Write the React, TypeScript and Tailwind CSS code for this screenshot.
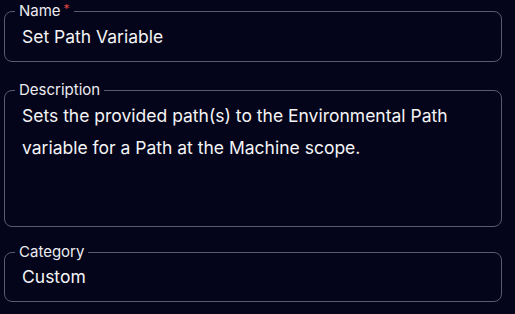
import React from 'react';

const Field = ({ label, required, children, className = '' }: { label: string; required?: boolean; children: React.ReactNode; className?: string }) => (
    <fieldset className={`rounded-lg border border-[#5a5a6e] px-[10px] ${className}`}>
        <legend className="px-1 text-[15px] leading-5 text-[#ececf0]">
            {label}
            {required && <span className="ml-[3px] align-top text-[12px] leading-4 text-[#e0453f]">*</span>}
        </legend>
        {children}
    </fieldset>
);

export default function App() {
    return (
        <div className="min-h-screen bg-[#04041a] px-[4px] pt-px pr-[13px] font-['Inter','Noto_Sans',sans-serif] text-white">
            <Field label="Name" required>
                <div className="pl-[7px] pt-[4px] pb-[12px] text-[17.5px] leading-6 text-[#f4f4f6]">Set Path Variable</div>
            </Field>
            <Field label="Description" className="mt-[18px]">
                <div className="h-[126px] pl-[7px] pr-4 text-[17.5px] leading-8 text-[#f4f4f6]">
                    Sets the provided path(s) to the Environmental Path variable for a Path at the Machine scope.
                </div>
            </Field>
            <Field label="Category" className="mt-[15px]">
                <div className="pl-[7px] pt-[3px] pb-[12px] text-[17.5px] leading-6 text-[#f4f4f6]">Custom</div>
            </Field>
        </div>
    );
}
